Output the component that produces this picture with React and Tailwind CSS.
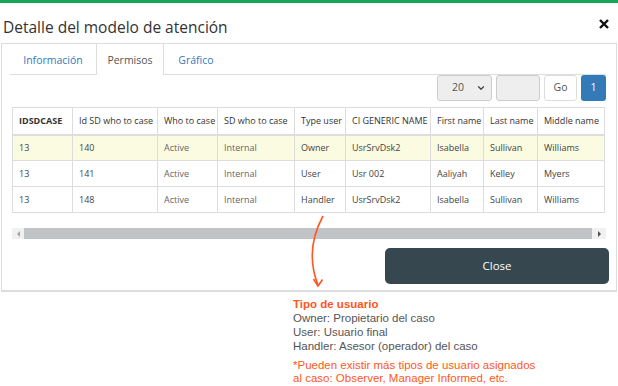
import { ChevronDown } from "lucide-react";

const columns = [
  { label: "IDSDCASE", width: 60, bold: true },
  { label: "Id SD who to case", width: 85 },
  { label: "Who to case", width: 60 },
  { label: "SD who to case", width: 77 },
  { label: "Type user", width: 51 },
  { label: "CI GENERIC NAME", width: 85 },
  { label: "First name", width: 53 },
  { label: "Last name", width: 54 },
  { label: "Middle name", width: 67 },
];

const rows = [
  ["13", "140", "Active", "Internal", "Owner", "UsrSrvDsk2", "Isabella", "Sullivan", "Williams"],
  ["13", "141", "Active", "Internal", "User", "Usr 002", "Aaliyah", "Kelley", "Myers"],
  ["13", "148", "Active", "Internal", "Handler", "UsrSrvDsk2", "Isabella", "Sullivan", "Williams"],
];

function Tabs() {
  return (
    <div className="-ml-[2px] flex h-[31px] border-b border-[#ddd] text-[10.5px]">
      <div className="flex w-[86px] items-center justify-center pt-[3px] text-[#337ab7]">Información</div>
      <div className="-mb-px -mt-px flex w-[68px] items-center justify-center border border-b-0 border-[#ddd] bg-white pt-[3px] text-[#555]">
        Permisos
      </div>
      <div className="flex w-[64px] items-center justify-center pt-[3px] text-[#337ab7]">Gráfico</div>
    </div>
  );
}

function Pager() {
  return (
    <div className="flex h-[26px] justify-end gap-[4px]">
      <div className="flex w-[55px] items-center justify-between rounded-[3px] border border-[#ccc] bg-[#eee] pl-[14px] pr-[5px] text-[10.5px] text-[#555]">
        <span>20</span>
        <ChevronDown size={10} strokeWidth={3} className="text-[#444]" />
      </div>
      <div className="w-[44px] rounded-[3px] border border-[#ccc] bg-[#eee]" />
      <div className="flex w-[33px] items-center justify-center rounded-[3px] border border-[#ddd] bg-white text-[10.5px] text-[#555]">
        Go
      </div>
      <div className="flex w-[25px] items-center justify-center rounded-[3px] bg-[#337ab7] text-[10.5px] text-white">
        1
      </div>
    </div>
  );
}

function DataTable() {
  return (
    <table className="mt-[6px] w-[592px] table-fixed border-collapse border border-[#ddd] text-[9px]">
      <colgroup>
        {columns.map((c) => (
          <col key={c.label} style={{ width: c.width }} />
        ))}
      </colgroup>
      <thead>
        <tr className="h-[27px] border-b-2 border-[#ddd]">
          {columns.map((c) => (
            <th
              key={c.label}
              className={`whitespace-nowrap border-r border-[#ddd] px-[6px] text-left text-[#333] ${c.bold ? "font-bold" : "font-normal"}`}
            >
              {c.label}
            </th>
          ))}
        </tr>
      </thead>
      <tbody>
        {rows.map((row, i) => (
          <tr key={i} className={`h-[26px] border-b border-[#ddd] ${i === 0 ? "bg-[#fbfbe1]" : "bg-white"}`}>
            {row.map((cell, j) => (
              <td
                key={j}
                className={`whitespace-nowrap border-r border-[#ddd] px-[6px] ${j < 2 || j > 3 ? "text-[#444]" : "text-[#666]"}`}
              >
                {cell}
              </td>
            ))}
          </tr>
        ))}
      </tbody>
    </table>
  );
}

function Scrollbar() {
  return (
    <div className="mt-[15px] flex h-[11px] items-center bg-[#f1f1f1]">
      <div className="flex w-[12px] justify-center">
        <div className="h-0 w-0 border-y-[3px] border-r-[3px] border-y-transparent border-r-[#a3a3a3]" />
      </div>
      <div className="h-full flex-1 bg-[#c1c4c6]" />
      <div className="flex w-[14px] justify-center">
        <div className="h-0 w-0 border-y-[3px] border-l-[3px] border-y-transparent border-l-[#505050]" />
      </div>
    </div>
  );
}

export default function App() {
  return (
    <div className="relative h-[386px] w-[618px] overflow-hidden bg-white font-['Open_Sans',sans-serif]">
      <div className="h-[3px] bg-[#17a754]" />

      <div className="flex h-[40px] items-start justify-between pl-[3px] pr-[9px]">
        <h1 className="pt-[14px] text-[15.5px] leading-[20px] text-[#333]">Detalle del modelo de atención</h1>
        <svg width="10" height="10" viewBox="0 0 10 10" className="mt-[16px]">
          <path d="M1 1 L9 9 M9 1 L1 9" stroke="#111" strokeWidth="2.4" />
        </svg>
      </div>

      <div className="ml-[1px] flex w-[616px] flex-col border border-b-2 border-[#ddd] px-[10px] pb-[6px]">
        <Tabs />
        <Pager />
        <DataTable />
        <Scrollbar />
        <button className="-mr-[3px] mt-[9px] h-[36px] w-[224px] self-end rounded-[5px] bg-[#37474f] text-[11.5px] text-white">
          Close
        </button>
      </div>

      <div className="pl-[293px] pt-[5px] font-['Liberation_Sans',Arial,sans-serif] text-[11.5px] leading-[14px] text-[#555]">
        <p className="font-bold text-[#ff5722]">Tipo de usuario</p>
        <p>Owner: Propietario del caso</p>
        <p>User: Usuario final</p>
        <p>Handler: Asesor (operador) del caso</p>
        <p className="mt-[6px] leading-[13px] text-[#ff5722]">
          *Pueden existir más tipos de usuario asignados
          <br />
          al caso: Observer, Manager Informed, etc.
        </p>
      </div>

      <svg className="pointer-events-none absolute left-0 top-0" width="618" height="386">
        <path d="M323 216 C 311 238, 309 262, 318 285" fill="none" stroke="#ff5722" strokeWidth="1.6" />
        <path d="M313.5 279 L318 286 L322.5 279.5" fill="none" stroke="#ff5722" strokeWidth="1.6" />
      </svg>
    </div>
  );
}
